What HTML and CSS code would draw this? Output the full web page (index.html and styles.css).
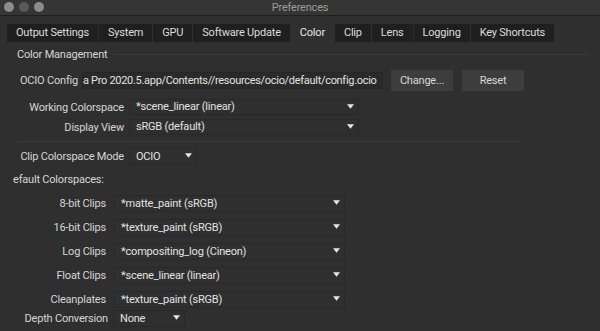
FILE: index.html
```html
<!DOCTYPE html>
<html lang="en">
<head>
    <meta charset="UTF-8">
    <title>Preferences</title>
    <link rel="stylesheet" href="styles.css">
</head>
<body>
    <div class="window">
        <header class="titlebar">
            <div class="lights">
                <span class="light"></span>
                <span class="light dim"></span>
                <span class="light"></span>
            </div>
            <span class="title">Preferences</span>
        </header>

        <nav class="tabs">
            <span class="tab">Output Settings</span>
            <span class="tab">System</span>
            <span class="tab">GPU</span>
            <span class="tab">Software Update</span>
            <span class="tab active">Color</span>
            <span class="tab">Clip</span>
            <span class="tab">Lens</span>
            <span class="tab">Logging</span>
            <span class="tab">Key Shortcuts</span>
        </nav>

        <main class="panel">
            <div class="group-title">
                <span>Color Management</span>
                <span class="rule"></span>
            </div>

            <div class="row ocio">
                <span class="label">OCIO Config</span>
                <div class="path">a Pro 2020.5.app/Contents//resources/ocio/default/config.ocio</div>
                <button class="btn">Change...</button>
                <button class="btn">Reset</button>
            </div>

            <div class="row work">
                <span class="label">Working Colorspace</span>
                <div class="select wide">*scene_linear (linear)<svg class="arrow" viewBox="0 0 8 5"><polygon points="0,0 8,0 4,5"/></svg></div>
            </div>
            <div class="row work">
                <span class="label">Display View</span>
                <div class="select wide">sRGB (default)<svg class="arrow" viewBox="0 0 8 5"><polygon points="0,0 8,0 4,5"/></svg></div>
            </div>

            <div class="divider"></div>

            <div class="row mode">
                <span class="label">Clip Colorspace Mode</span>
                <div class="select small">OCIO<svg class="arrow" viewBox="0 0 8 5"><polygon points="0,0 8,0 4,5"/></svg></div>
            </div>

            <div class="subhead"><span>Default Colorspaces:</span></div>

            <div class="row clips">
                <span class="label">8-bit Clips</span>
                <div class="select clip">*matte_paint (sRGB)<svg class="arrow" viewBox="0 0 8 5"><polygon points="0,0 8,0 4,5"/></svg></div>
            </div>
            <div class="row clips">
                <span class="label">16-bit Clips</span>
                <div class="select clip">*texture_paint (sRGB)<svg class="arrow" viewBox="0 0 8 5"><polygon points="0,0 8,0 4,5"/></svg></div>
            </div>
            <div class="row clips">
                <span class="label">Log Clips</span>
                <div class="select clip">*compositing_log (Cineon)<svg class="arrow" viewBox="0 0 8 5"><polygon points="0,0 8,0 4,5"/></svg></div>
            </div>
            <div class="row clips">
                <span class="label">Float Clips</span>
                <div class="select clip">*scene_linear (linear)<svg class="arrow" viewBox="0 0 8 5"><polygon points="0,0 8,0 4,5"/></svg></div>
            </div>
            <div class="row clips">
                <span class="label">Cleanplates</span>
                <div class="select clip">*texture_paint (sRGB)<svg class="arrow" viewBox="0 0 8 5"><polygon points="0,0 8,0 4,5"/></svg></div>
            </div>
            <div class="row depth">
                <span class="label">Depth Conversion</span>
                <div class="select tiny">None<svg class="arrow" viewBox="0 0 8 5"><polygon points="0,0 8,0 4,5"/></svg></div>
            </div>
        </main>
    </div>
</body>
</html>
```

FILE: styles.css
```css
* {
    margin: 0;
    padding: 0;
    box-sizing: border-box;
}

body {
    width: 600px;
    height: 331px;
    overflow: hidden;
    background: #2f2f2f;
    color: #d6d6d6;
    font-family: Roboto, 'Noto Sans', sans-serif;
    font-size: 11px;
    letter-spacing: -0.2px;
    white-space: nowrap;
}

.window {
    height: 100%;
}

/* title bar */
.titlebar {
    position: relative;
    height: 16px;
    background: #353535;
    border-bottom: 1px solid #1f1f1f;
    display: flex;
    align-items: center;
    justify-content: center;
}

.lights {
    position: absolute;
    left: 4px;
    top: 2px;
    display: flex;
    gap: 5px;
}

.light {
    width: 10px;
    height: 10px;
    border-radius: 50%;
    background: #8c8c8c;
}

.light.dim {
    background: #5a5a5a;
}

.title {
    color: #9b9b9b;
}

/* tabs */
.tabs {
    display: flex;
    gap: 1px;
    padding: 8px 0 0 7px;
}

.tab {
    height: 18px;
    padding: 0 9px;
    line-height: 18px;
    background: #1f1f1f;
    color: #dcdcdc;
}

.tab.active {
    background: transparent;
    color: #e6e6e6;
}

/* panel */
.panel {
    padding-top: 5px;
}

.group-title {
    display: flex;
    align-items: center;
    gap: 6px;
    padding: 0 12px 0 17px;
    height: 14px;
}

.group-title .rule {
    flex: 1;
    height: 1px;
    background: #3a3a3a;
}

.row {
    display: flex;
    align-items: center;
}

.label {
    color: #d6d6d6;
    text-align: right;
    flex-shrink: 0;
}

.ocio {
    margin-top: 9px;
    height: 21px;
    padding-left: 20px;
}

.ocio .label {
    width: 60px;
    text-align: left;
}

.path {
    margin-left: 2px;
    width: 301px;
    height: 17px;
    line-height: 15px;
    border: 1px solid #262626;
    background: #2a2a2a;
    color: #e2e2e2;
    letter-spacing: -0.3px;
    overflow: hidden;
}

.btn {
    margin-left: 8px;
    width: 62px;
    height: 21px;
    border: none;
    background: #3d3d3d;
    color: #d8d8d8;
    font-family: inherit;
    font-size: 11px;
    letter-spacing: inherit;
}

.btn + .btn {
    margin-left: 9px;
}

.select {
    position: relative;
    height: 16px;
    line-height: 14px;
    padding-left: 6px;
    border: 1px solid #282828;
    color: #e2e2e2;
}

.arrow {
    position: absolute;
    right: 4px;
    top: 4px;
    width: 7px;
    height: 5px;
    fill: #e8e8e8;
}

.work {
    height: 16px;
    margin-top: 8px;
}

.work + .work {
    margin-top: 4px;
}

.work .label {
    width: 124px;
}

.select.wide {
    margin-left: 5px;
    width: 230px;
}

.divider {
    margin: 6px 0 0 17px;
    width: 505px;
    height: 1px;
    background: #3a3a3a;
}

.mode {
    margin-top: 6px;
    height: 17px;
}

.mode .label {
    width: 124px;
}

.select.small {
    margin-left: 5px;
    width: 68px;
    height: 17px;
    line-height: 15px;
}

.subhead {
    margin: 8px 0 0 13px;
    width: 120px;
    height: 14px;
    line-height: 14px;
    overflow: hidden;
}

.subhead span {
    margin-left: -7px;
}

.clips {
    height: 17px;
    margin-top: 7px;
}

.subhead + .clips {
    margin-top: 8px;
}

.clips .label {
    width: 106px;
}

.select.clip {
    margin-left: 8px;
    width: 231px;
    height: 17px;
    line-height: 15px;
}

.depth {
    height: 17px;
    margin-top: 2px;
}

.depth .label {
    width: 108px;
}

.select.tiny {
    margin-left: 5px;
    width: 72px;
    height: 17px;
    line-height: 15px;
}
```
